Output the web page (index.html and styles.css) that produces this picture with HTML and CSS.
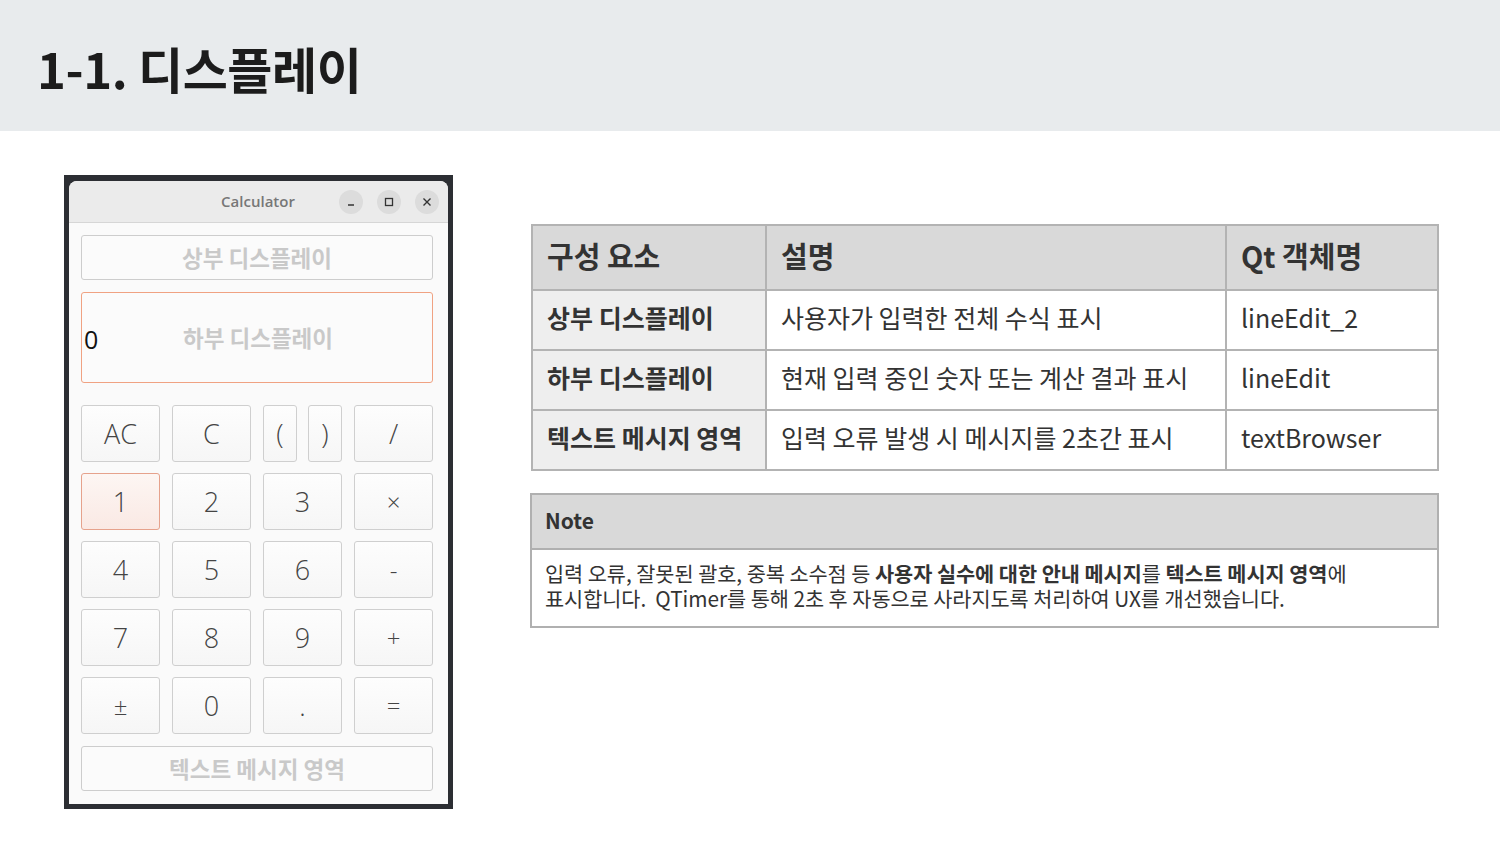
FILE: index.html
```html
<!DOCTYPE html>
<html>
<head>
    <title>1-1. 디스플레이</title>
    <meta name="viewport" content="width=device-width, initial-scale=1.0">
    <link rel="stylesheet" href="styles.css">
</head>
<body>
    <header class="slide-head">
        <h1>1-1. 디스플레이</h1>
    </header>

    <main class="slide-body">
        <!-- Calculator window capture -->
        <div class="calc-frame">
            <div class="calc-window">
                <div class="title-bar">
                    <span></span>
                    <span class="title">Calculator</span>
                    <div class="controls">
                        <span class="ctl">
                            <svg width="10" height="10" viewBox="0 0 10 10"><path d="M2 8h6" stroke="#333" stroke-width="1.4"/></svg>
                        </span>
                        <span class="ctl">
                            <svg width="10" height="10" viewBox="0 0 10 10"><rect x="1.5" y="1.5" width="7" height="7" fill="none" stroke="#333" stroke-width="1.3"/></svg>
                        </span>
                        <span class="ctl">
                            <svg width="10" height="10" viewBox="0 0 10 10"><path d="M1.5 1.5l7 7M8.5 1.5l-7 7" stroke="#333" stroke-width="1.4"/></svg>
                        </span>
                    </div>
                </div>

                <div class="calc-content">
                    <div class="display top-display">상부 디스플레이</div>
                    <div class="display main-display">
                        <span class="value">0</span>
                        <span class="hint">하부 디스플레이</span>
                    </div>

                    <div class="keys">
                        <button class="key">AC</button>
                        <button class="key">C</button>
                        <div class="paren-pair">
                            <button class="key">(</button>
                            <button class="key">)</button>
                        </div>
                        <button class="key">/</button>

                        <button class="key focused">1</button>
                        <button class="key">2</button>
                        <button class="key">3</button>
                        <button class="key op">×</button>

                        <button class="key">4</button>
                        <button class="key">5</button>
                        <button class="key">6</button>
                        <button class="key op">-</button>

                        <button class="key">7</button>
                        <button class="key">8</button>
                        <button class="key">9</button>
                        <button class="key op">+</button>

                        <button class="key op">±</button>
                        <button class="key">0</button>
                        <button class="key">.</button>
                        <button class="key op">=</button>
                    </div>

                    <div class="display msg-display">텍스트 메시지 영역</div>
                </div>
            </div>
        </div>

        <!-- Description -->
        <section class="info">
            <table class="parts">
                <thead>
                    <tr>
                        <th class="col-name">구성 요소</th>
                        <th class="col-desc">설명</th>
                        <th class="col-obj">Qt 객체명</th>
                    </tr>
                </thead>
                <tbody>
                    <tr>
                        <td class="name">상부 디스플레이</td>
                        <td>사용자가 입력한 전체 수식 표시</td>
                        <td>lineEdit_2</td>
                    </tr>
                    <tr>
                        <td class="name">하부 디스플레이</td>
                        <td>현재 입력 중인 숫자 또는 계산 결과 표시</td>
                        <td>lineEdit</td>
                    </tr>
                    <tr>
                        <td class="name">텍스트 메시지 영역</td>
                        <td>입력 오류 발생 시 메시지를 2초간 표시</td>
                        <td>textBrowser</td>
                    </tr>
                </tbody>
            </table>

            <div class="note">
                <div class="note-head">Note</div>
                <div class="note-text">
                    <p>입력 오류, 잘못된 괄호, 중복 소수점 등 <b>사용자 실수에 대한 안내 메시지</b>를 <b>텍스트 메시지 영역</b>에</p>
                    <p>표시합니다.&nbsp; QTimer를 통해 2초 후 자동으로 사라지도록 처리하여 UX를 개선했습니다.</p>
                </div>
            </div>
        </section>
    </main>
</body>
</html>
```

FILE: styles.css
```css
body {
    margin: 0;
    background-color: #fff;
    color: #333;
    font-family: "Noto Sans CJK KR", "Noto Sans", sans-serif;
}

/* Slide header */
.slide-head {
    height: 131px;
    background-color: #e8ebed;
    display: flex;
    align-items: center;
    padding-left: 37px;
    box-sizing: border-box;
    padding-top: 3px;
}

.slide-head h1 {
    margin: 0;
    font-size: 49px;
    font-weight: 700;
    color: #1c1c1c;
    letter-spacing: -0.4px;
}

.slide-body {
    display: flex;
    align-items: flex-start;
    padding-left: 64px;
}

/* Calculator capture */
.calc-frame {
    margin-top: 44px;
    width: 389px;
    padding: 6px 5px 5px 5px;
    background-color: #2c2e33;
    box-sizing: border-box;
}

.calc-window {
    background-color: #fafafa;
    border-radius: 8px 8px 0 0;
    overflow: hidden;
}

.title-bar {
    height: 41px;
    display: grid;
    grid-template-columns: 1fr auto 1fr;
    align-items: center;
    background-color: #ebebeb;
    border-bottom: 1px solid #d6d6d6;
    padding-right: 9px;
}

.title-bar .title {
    font-family: "Open Sans", sans-serif;
    font-size: 15px;
    font-weight: 600;
    color: #777;
    padding-left: 8px;
    padding-bottom: 2px;
}

.controls {
    display: flex;
    justify-content: flex-end;
    gap: 14px;
}

.ctl {
    width: 24px;
    height: 24px;
    border-radius: 50%;
    background-color: #dcdcdc;
    display: flex;
    align-items: center;
    justify-content: center;
}

.calc-content {
    padding: 12px 15px 13px 12px;
}

.display {
    border: 1px solid #cdcdcd;
    border-radius: 3px;
    background-color: #fbfbfb;
    color: #c9c9c9;
    font-size: 22.5px;
    font-weight: 700;
    text-align: center;
    box-sizing: border-box;
}

.top-display {
    height: 45px;
    line-height: 42px;
}

.main-display {
    margin-top: 12px;
    height: 91px;
    border-color: #f0a282;
    display: grid;
    align-items: center;
    padding-left: 2px;
}

.main-display .value,
.main-display .hint {
    grid-area: 1 / 1;
}

.main-display .value {
    justify-self: start;
    font-family: "Open Sans", sans-serif;
    font-size: 25px;
    font-weight: 400;
    color: #111;
    padding-top: 2px;
}

.main-display .hint {
    justify-self: center;
    padding-bottom: 2px;
}

.keys {
    margin-top: 22px;
    display: grid;
    grid-template-columns: repeat(4, 79px);
    grid-auto-rows: 57px;
    column-gap: 12px;
    row-gap: 11px;
}

.paren-pair {
    display: grid;
    grid-template-columns: 34px 34px;
    column-gap: 11px;
}

.key {
    margin: 0;
    padding: 0;
    border: 1px solid #cfcfcf;
    border-radius: 3px;
    background: linear-gradient(#fdfdfd, #f6f6f6);
    font-family: "Open Sans", sans-serif;
    font-weight: 300;
    font-size: 27px;
    color: #444;
}

.key.op {
    font-size: 24px;
}

.key.focused {
    border-color: #e6a28c;
    background: linear-gradient(#fdf6f3, #fae9e4);
}

.msg-display {
    margin-top: 12px;
    height: 45px;
    line-height: 42px;
}

/* Description */
.info {
    margin-left: 78px;
    margin-top: 93px;
    width: 908px;
}

.parts {
    width: 908px;
    border-collapse: collapse;
    border: 2px solid #adadad;
    color: #333;
}

.parts th,
.parts td {
    border: 2px solid #b3b3b3;
    text-align: left;
    padding: 0 0 6px 14px;
}

.parts th {
    height: 57px;
    background-color: #d9d9d9;
    font-size: 29px;
    font-weight: 700;
}

.parts td {
    height: 52px;
    font-size: 25px;
    background-color: #fff;
}

.parts td.name {
    background-color: #eeeeee;
    font-weight: 700;
}

.col-name {
    width: 218px;
}

.col-desc {
    width: 444px;
}

.note {
    margin-top: 22px;
    border: 2px solid #b0b0b0;
    margin-left: -1px;
}

.note-head {
    height: 53px;
    line-height: 50px;
    background-color: #d9d9d9;
    border-bottom: 2px solid #b0b0b0;
    padding-left: 13px;
    font-size: 21px;
    font-weight: 700;
}

.note-text {
    padding: 11px 13px 15px 13px;
    color: #333;
}

.note-text p {
    margin: 0;
    height: 25px;
    font-size: 20.8px;
    line-height: 25px;
    letter-spacing: -0.05px;
}

.note-text b {
    font-weight: 700;
}
```
